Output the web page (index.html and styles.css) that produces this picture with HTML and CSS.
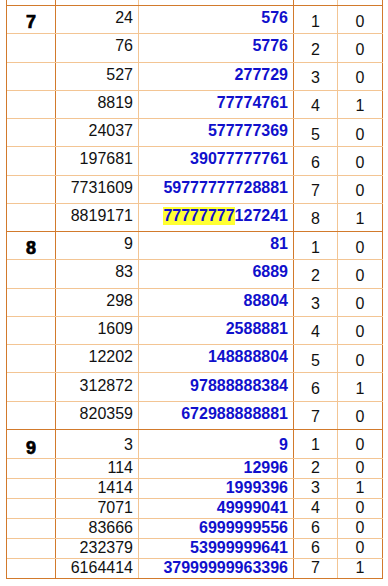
FILE: index.html
```html
<!DOCTYPE html>
<html>
<head>
<meta charset="utf-8">
<link rel="stylesheet" href="styles.css">
</head>
<body>
<div class="tbl">
  <div class="row top"><div class="c n"></div><div class="c a"></div><div class="c b"></div><div class="c d"></div><div class="c e"></div></div>

  <div class="row big"><div class="c n"><span class="g">7</span></div><div class="c a">24</div><div class="c b">576</div><div class="c d">1</div><div class="c e">0</div></div>
  <div class="row big"><div class="c n"></div><div class="c a">76</div><div class="c b">5776</div><div class="c d">2</div><div class="c e">0</div></div>
  <div class="row big"><div class="c n"></div><div class="c a">527</div><div class="c b">277729</div><div class="c d">3</div><div class="c e">0</div></div>
  <div class="row big"><div class="c n"></div><div class="c a">8819</div><div class="c b">77774761</div><div class="c d">4</div><div class="c e">1</div></div>
  <div class="row big"><div class="c n"></div><div class="c a">24037</div><div class="c b">577777369</div><div class="c d">5</div><div class="c e">0</div></div>
  <div class="row big"><div class="c n"></div><div class="c a">197681</div><div class="c b">39077777761</div><div class="c d">6</div><div class="c e">0</div></div>
  <div class="row big"><div class="c n"></div><div class="c a">7731609</div><div class="c b">59777777728881</div><div class="c d">7</div><div class="c e">0</div></div>
  <div class="row big end"><div class="c n"></div><div class="c a">8819171</div><div class="c b"><mark class="hl">77777777</mark>127241</div><div class="c d">8</div><div class="c e">1</div></div>

  <div class="row big g8"><div class="c n"><span class="g">8</span></div><div class="c a">9</div><div class="c b">81</div><div class="c d">1</div><div class="c e">0</div></div>
  <div class="row big g8"><div class="c n"></div><div class="c a">83</div><div class="c b">6889</div><div class="c d">2</div><div class="c e">0</div></div>
  <div class="row big g8"><div class="c n"></div><div class="c a">298</div><div class="c b">88804</div><div class="c d">3</div><div class="c e">0</div></div>
  <div class="row big g8"><div class="c n"></div><div class="c a">1609</div><div class="c b">2588881</div><div class="c d">4</div><div class="c e">0</div></div>
  <div class="row big g8"><div class="c n"></div><div class="c a">12202</div><div class="c b">148888804</div><div class="c d">5</div><div class="c e">0</div></div>
  <div class="row big g8"><div class="c n"></div><div class="c a">312872</div><div class="c b">97888888384</div><div class="c d">6</div><div class="c e">1</div></div>
  <div class="row big g8 end"><div class="c n"></div><div class="c a">820359</div><div class="c b">672988888881</div><div class="c d">7</div><div class="c e">0</div></div>

  <div class="row first"><div class="c n"><span class="g">9</span></div><div class="c a">3</div><div class="c b">9</div><div class="c d">1</div><div class="c e">0</div></div>
  <div class="row small"><div class="c n"></div><div class="c a">114</div><div class="c b">12996</div><div class="c d">2</div><div class="c e">0</div></div>
  <div class="row small"><div class="c n"></div><div class="c a">1414</div><div class="c b">1999396</div><div class="c d">3</div><div class="c e">1</div></div>
  <div class="row small"><div class="c n"></div><div class="c a">7071</div><div class="c b">49999041</div><div class="c d">4</div><div class="c e">0</div></div>
  <div class="row small"><div class="c n"></div><div class="c a">83666</div><div class="c b">6999999556</div><div class="c d">6</div><div class="c e">0</div></div>
  <div class="row small"><div class="c n"></div><div class="c a">232379</div><div class="c b">53999999641</div><div class="c d">6</div><div class="c e">0</div></div>
  <div class="row small end"><div class="c n"></div><div class="c a">6164414</div><div class="c b">37999999963396</div><div class="c d">7</div><div class="c e">1</div></div>
</div>
</body>
</html>
```

FILE: styles.css
```css
html, body {
  margin: 0;
  padding: 0;
  background: #ffffff;
}
body {
  font-family: "Liberation Sans", Arial, sans-serif;
  font-size: 16px;
  color: #111111;
}
.tbl {
  margin-left: 6px;
  width: 377px;
  border-left: 1px solid #d27a2c;
  box-sizing: border-box;
}
.row {
  display: grid;
  grid-template-columns: 49px 83px 155px 44px 45px;
  box-sizing: border-box;
  border-bottom: 1px solid #f3c594;
}
.row.end, .row.top {
  border-bottom: 1px solid #d27a2c;
}
.row.top {
  height: 6px;
}
.row.big {
  height: 28.25px;
}
.row.big.g8 {
  height: 28.2857px;
}
.row.first {
  height: 29px;
}
.row.small {
  height: 20px;
}
.c {
  box-sizing: border-box;
  display: flex;
  align-items: center;
  line-height: 18px;
  white-space: nowrap;
}
.n {
  border-right: 1px solid #d27a2c;
  justify-content: center;
  align-items: flex-start;
}
.a {
  border-right: 1px solid #f3c594;
  justify-content: flex-end;
  padding-right: 5px;
}
.b {
  border-right: 1px solid #d27a2c;
  justify-content: flex-end;
  padding-right: 5px;
  font-weight: bold;
  color: #1010cc;
}
.d {
  border-right: 1px solid #f3c594;
  justify-content: center;
}
.e {
  border-right: 1px solid #d27a2c;
  justify-content: center;
}
.big .a, .big .b {
  padding-bottom: 3px;
}
.big .d, .big .e {
  padding-top: 4px;
}
.first .c {
  padding-top: 2px;
}
.g {
  font-size: 18px;
  font-weight: bold;
  color: #000000;
  line-height: 18px;
  padding-top: 7px;
  -webkit-text-stroke: 0.7px #000000;
}
.hl {
  background: #ffff33;
  color: inherit;
  padding: 0;
}
```
